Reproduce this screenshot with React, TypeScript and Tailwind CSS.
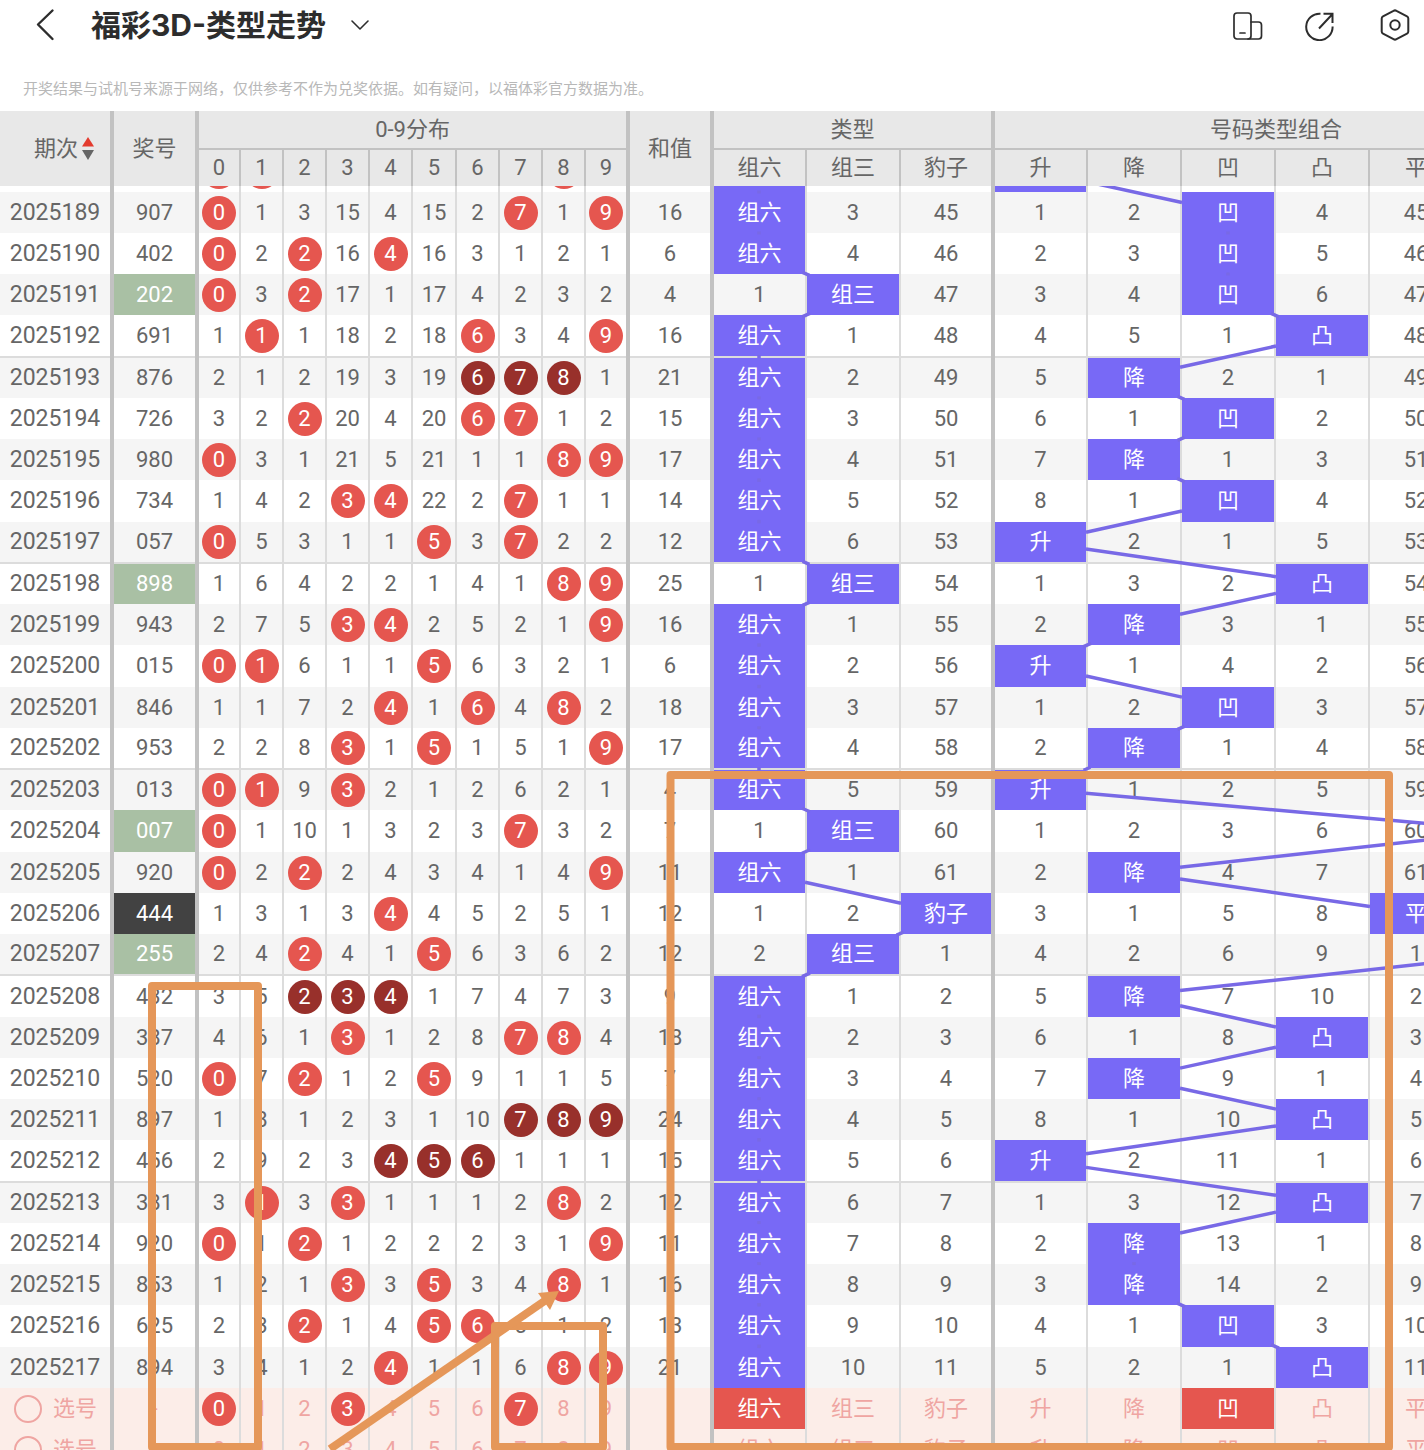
import clsx from 'clsx';

const draws = [
  '018', '907', '402', '202', '691', '876', '726', '980', '734', '057',
  '898', '943', '015', '846', '953', '013', '007', '920', '444', '255',
  '432', '387', '520', '897', '456', '381', '920', '853', '625', '894',
];
const firstIssue = 2025188;

const digits = ['0', '1', '2', '3', '4', '5', '6', '7', '8', '9'];
const types = ['组六', '组三', '豹子'];
const shapes = ['升', '降', '凹', '凸', '平', ''];

// misses carried into the first draw
const digitStart = [0, 0, 1, 13, 2, 13, 0, 1, 0, 0];
const typeStart = [0, 1, 43];
const shapeStart = [0, 0, 0, 2, 43, 0];

const typeOf = (draw: string) => 3 - new Set(draw).size;

const shapeOf = (draw: string) => {
  const [a, b, c] = draw.split('').map(Number);
  if (a < b && b < c) return 0;
  if (a > b && b > c) return 1;
  if (b < a && b < c) return 2;
  if (b > a && b > c) return 3;
  return a === b && b === c ? 4 : 5;
};

const isRun = (draw: string) => {
  const s = draw.split('').map(Number).sort();
  return s[1] === s[0] + 1 && s[2] === s[1] + 1;
};

const track = (start: number[], hit: (draw: string, i: number) => boolean) => {
  let prev = start;
  return draws.map((d) => {
    prev = prev.map((n, i) => (hit(d, i) ? 0 : n + 1));
    return prev;
  });
};

const digitMiss = track(digitStart, (d, i) => d.includes(String(i)));
const typeMiss = track(typeStart, (d, i) => typeOf(d) === i);
const shapeMiss = track(shapeStart, (d, i) => shapeOf(d) === i);

// geometry of the trend lines, same units as the columns below
const TABLE_W = 1557;
const COL_W = 94;
const isTall = (i: number) => i > 0 && i % 4 === 0;
const rowH = (i: number) => (isTall(i) ? 42 : 41);
const rowMid = (i: number) => {
  let y = 0;
  for (let k = 0; k < i; k++) y += rowH(k);
  return y + rowH(i) / 2;
};
const bodyH = rowMid(31) + 21;

const trend = (left: number, pick: (draw: string) => number) =>
  draws.slice(1).map((d, i) => {
    const x1 = left + COL_W * (pick(draws[i]) + 0.5);
    const x2 = left + COL_W * (pick(d) + 0.5);
    const y1 = rowMid(i);
    const y2 = rowMid(i + 1);
    const dx = x2 - x1;
    const dy = y2 - y1;
    // keep the line out of both highlighted cells
    const t = Math.min(dx ? 46 / Math.abs(dx) : 1, 19 / dy);
    return { x1: x1 + dx * t, y1: y1 + dy * t, x2: x2 - dx * t, y2: y2 - dy * t };
  });

const lines = [...trend(712, typeOf), ...trend(993, shapeOf)];

const Cols = () => (
  <colgroup>
    <col className="w-[112px]" />
    <col className="w-[85px]" />
    {digits.map((d) => <col key={d} className={d === '5' ? 'w-[44px]' : 'w-[43px]'} />)}
    <col className="w-[84px]" />
    {types.map((t, i) => <col key={t} className={i === 2 ? 'w-[93px]' : 'w-[94px]'} />)}
    {shapes.map((s) => <col key={s} className="w-[94px]" />)}
  </colgroup>
);

const tableClass = 'w-[calc(100%+133px)] table-fixed border-collapse text-center text-[22px] leading-[28px]';
const thick = 'border-r-4 border-r-[#c2c2c2]';
const thin = 'border-r-2 border-r-[#dcdcdc]';
const thinHead = 'border-r-2 border-r-[#c2c2c2]';

const Ball = ({ n, dark }: { n: string; dark?: boolean }) => (
  <span
    className={clsx(
      'mx-auto flex size-[34px] items-center justify-center rounded-full text-white',
      dark ? 'bg-[#98302b]' : 'bg-[#e5564f]',
    )}
  >
    {n}
  </span>
);

const TitleBar = () => (
  <header className="flex h-[50px] shrink-0 items-center pl-[31px] pr-[13px] text-[#2d2d2d]">
    <button aria-label="返回" className="mr-[32px]">
      <svg width="28" height="34" viewBox="0 0 28 34" fill="none" stroke="currentColor" strokeWidth="2.4" strokeLinecap="round" strokeLinejoin="round">
        <path d="M21.500 2.500 7 16.500 21.500 31" />
      </svg>
    </button>
    <h1 className="font-[Inter,'Noto_Sans_CJK_SC',sans-serif] text-[30px] font-bold leading-[40px]">福彩3D-类型走势</h1>
    <button aria-label="切换走势" className="ml-[24px]">
      <svg width="20" height="12" viewBox="0 0 20 12" fill="none" stroke="currentColor" strokeWidth="1.6" strokeLinecap="round" strokeLinejoin="round">
        <path d="m2 2 8 8 8-8" />
      </svg>
    </button>
    <div className="ml-auto flex items-center gap-[42px]">
      <button aria-label="横屏">
        <svg width="32" height="32" viewBox="0 0 32 32" fill="none" stroke="currentColor" strokeWidth="1.7" strokeLinecap="round" strokeLinejoin="round">
          <rect x="3" y="4" width="17" height="26" rx="3" />
          <path d="M20 13h7.500a3 3 0 0 1 3 3v11a3 3 0 0 1-3 3H17M9 24h5" />
        </svg>
      </button>
      <button aria-label="分享">
        <svg width="32" height="32" viewBox="0 0 32 32" fill="none" stroke="currentColor" strokeWidth="2">
          <path d="M15.500 4.800A13.200 13.200 0 1 0 27.600 17.500" />
          <path d="M14 19.500 27.300 5.200M18.500 4.800h9v9.200" />
        </svg>
      </button>
      <button aria-label="设置">
        <svg width="32" height="34" viewBox="0 0 32 34" fill="none" stroke="currentColor" strokeWidth="2" strokeLinejoin="round">
          <path d="M14.500 2.800a3 3 0 0 1 3 0l10.500 5.600a2.500 2.500 0 0 1 1.300 2.200v12.800a2.500 2.500 0 0 1-1.300 2.200l-10.500 5.600a3 3 0 0 1-3 0L4 25.600a2.500 2.500 0 0 1-1.300-2.200V10.600A2.500 2.500 0 0 1 4 8.400z" />
          <circle cx="16" cy="17" r="4.700" />
        </svg>
      </button>
    </div>
  </header>
);

const TableHead = () => (
  <table className={clsx(tableClass, 'shrink-0 bg-[#e8e8e8]')}>
    <Cols />
    <thead className="[&_th]:p-0 [&_th]:font-normal">
      <tr className="h-[38px]">
        <th rowSpan={2} className={thick}>
          <button className="inline-flex items-center gap-1 pl-[18px]">
            期次
            <svg width="12" height="24" viewBox="0 0 12 24">
              <path d="M6 0 12 9.500H0z" fill="#e33b2e" />
              <path d="M6 23 0 13h12z" fill="#666" />
            </svg>
          </button>
        </th>
        <th rowSpan={2} className={thick}>奖号</th>
        <th colSpan={10} className={clsx(thick, 'border-b-2 border-b-[#c2c2c2]')}>0-9分布</th>
        <th rowSpan={2} className={thick}>和值</th>
        <th colSpan={3} className={clsx(thick, 'border-b-2 border-b-[#c2c2c2]')}>类型</th>
        <th colSpan={6} className="border-b-2 border-b-[#c2c2c2]">号码类型组合</th>
      </tr>
      <tr className="h-[37px]">
        {digits.map((d) => <th key={d} className={d === '9' ? thick : thinHead}>{d}</th>)}
        {types.map((t, i) => <th key={t} className={i === 2 ? thick : thinHead}>{t}</th>)}
        {shapes.map((s) => <th key={s} className={thinHead}>{s}</th>)}
      </tr>
    </thead>
  </table>
);

// row scrolled under the header: only its fills and rules still show
const ScrolledRow = () => (
  <tr className="h-[41px] bg-white">
    <td className={thick} />
    <td className={thick} />
    {digitMiss[0].map((n, i) => (
      <td key={i} className={i === 9 ? thick : thin}>{!n && <Ball n="" />}</td>
    ))}
    <td className={thick} />
    {typeMiss[0].map((n, i) => (
      <td key={i} className={clsx(i === 2 ? thick : thin, !n && 'bg-[#7869f6]')} />
    ))}
    {shapeMiss[0].map((n, i) => (
      <td key={i} className={clsx(thin, !n && 'bg-[#7869f6]')} />
    ))}
  </tr>
);

const DrawRow = ({ index }: { index: number }) => {
  const draw = draws[index];
  const type = typeOf(draw);
  const run = isRun(draw);
  return (
    <tr
      className={clsx(
        isTall(index) ? 'h-[42px]' : 'h-[41px]',
        index % 2 ? 'bg-[#f5f5f5]' : 'bg-white',
        index % 5 === 0 && 'border-t-2 border-t-[#dcdcdc]',
      )}
    >
      <td className={clsx(thick, 'text-[23px]')}>{firstIssue + index}</td>
      <td
        className={clsx(
          thick,
          type === 1 && 'bg-[#a9c0a4] text-white',
          type === 2 && 'bg-[#424242] text-white',
        )}
      >
        {draw}
      </td>
      {digitMiss[index].map((n, i) => (
        <td key={i} className={i === 9 ? thick : thin}>
          {n ? n : <Ball n={digits[i]} dark={run} />}
        </td>
      ))}
      <td className={thick}>{draw.split('').reduce((sum, d) => sum + Number(d), 0)}</td>
      {typeMiss[index].map((n, i) => (
        <td key={i} className={clsx(i === 2 ? thick : thin, !n && 'bg-[#7869f6] text-white')}>
          {n || types[i]}
        </td>
      ))}
      {shapeMiss[index].map((n, i) => (
        <td key={i} className={clsx(thin, !n && 'bg-[#7869f6] text-white')}>
          {i < 5 && (n || shapes[i])}
        </td>
      ))}
    </tr>
  );
};

const PickRow = ({ id, picked }: { id: string; picked: string[] }) => (
  <tr className="h-[41px] bg-[#fcede8] text-[#efa5a2]">
    <td className={thick}>
      <label htmlFor={id} className="flex items-center gap-[11px] pl-[14px]">
        <input id={id} type="checkbox" className="size-[28px] appearance-none rounded-full border-2 border-[#efa5a2]" />
        选号
      </label>
    </td>
    <td className={thick}>-</td>
    {digits.map((d, i) => (
      <td key={d} className={i === 9 ? thick : thin}>
        <button className="block w-full">{picked.includes(d) ? <Ball n={d} /> : d}</button>
      </td>
    ))}
    <td className={thick}>-</td>
    {[...types, ...shapes].map((t, i) => (
      <td key={t} className={clsx(i === 2 ? thick : thin, picked.includes(t) && 'bg-[#e5564f] text-white')}>
        {t && <button className="block w-full">{t}</button>}
      </td>
    ))}
  </tr>
);

const Markup = () => (
  <svg
    className="pointer-events-none absolute inset-0 h-full w-full"
    viewBox="0 0 1424 1450"
    preserveAspectRatio="none"
    fill="none"
    stroke="#e59759"
    strokeWidth="8"
    strokeLinejoin="round"
  >
    <rect x="152" y="986" width="106" height="461" />
    <rect x="495" y="1326" width="108" height="121" />
    <rect x="670.500" y="775" width="718.500" height="672" />
    <path d="M330 1449 546 1300" />
    <path d="M559 1291 550 1310 538 1293z" fill="#e59759" stroke="none" />
  </svg>
);

export default function App() {
  return (
    <main className="relative flex h-screen flex-col overflow-hidden bg-white font-[Roboto,'Noto_Sans_CJK_SC',sans-serif] text-[#666]">
      <TitleBar />
      <p className="shrink-0 pb-[12px] pl-[23px] pt-[29px] text-[15px] leading-[20px] text-[#b8b8b8]">
        开奖结果与试机号来源于网络，仅供参考不作为兑奖依据。如有疑问，以福体彩官方数据为准。
      </p>
      <TableHead />
      <div className="min-h-0 flex-1 overflow-hidden">
        <div className="relative -mt-[35px]">
          <table className={tableClass}>
            <Cols />
            <tbody className="[&_td]:p-0">
              <ScrolledRow />
              {draws.slice(1).map((_, i) => <DrawRow key={i} index={i + 1} />)}
              <PickRow id="pick-1" picked={['0', '3', '7', '组六', '凹']} />
              <PickRow id="pick-2" picked={[]} />
            </tbody>
          </table>
          <svg
            className="pointer-events-none absolute left-0 top-0 h-full w-[calc(100%+133px)]"
            viewBox={`0 0 ${TABLE_W} ${bodyH}`}
            preserveAspectRatio="none"
            stroke="#7869e6"
            strokeWidth="3.500"
          >
            {lines.map((l, i) => <line key={i} {...l} />)}
          </svg>
        </div>
      </div>
      <Markup />
    </main>
  );
}
